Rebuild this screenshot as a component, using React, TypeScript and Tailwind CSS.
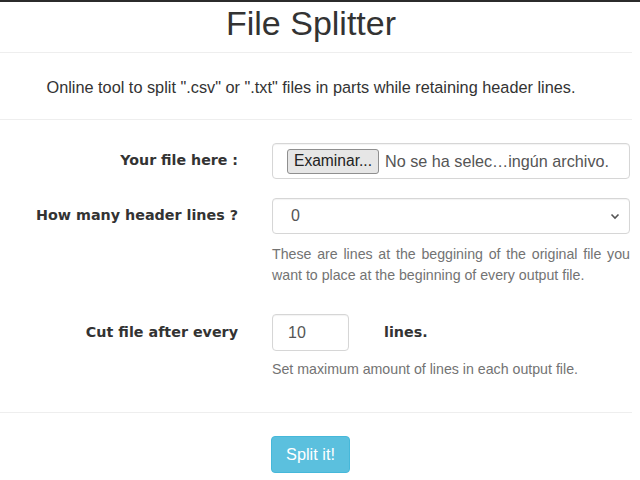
import React from "react";

const sans = { fontFamily: '"Liberation Sans", Arial, sans-serif' } as const;

export default function App() {
  return (
    <div className="w-[640px] h-[480px] bg-white overflow-hidden text-[#333] font-['Liberation_Sans',Arial,sans-serif]">
      <div className="h-[2px] bg-[#2b2b2b]" />
      <h1 className="w-[622px] mt-[3px] text-center text-[34px] leading-[37px] text-[#333]">File Splitter</h1>
      <div className="w-[632px] h-px bg-[#eeeeee] mt-[10px]" />
      <p className="w-[622px] text-center text-[16.3px] leading-[21px] mt-[24px] text-[#333]">
        Online tool to split ".csv" or ".txt" files in parts while retaining header lines.
      </p>
      <div className="w-[632px] h-px bg-[#eeeeee] mt-[21px]" />

      <div className="flex items-center mt-[23px]">
        <div className="w-[238px] text-right font-['DejaVu_Sans',Verdana,sans-serif] font-bold text-[14.2px] text-[#333]">
          Your file here :
        </div>
        <div className="ml-[34px] w-[358px] h-[36px] border border-[#d6d6d6] rounded-[4px] flex items-center pl-[14px] shadow-[inset_0_1px_1px_rgba(0,0,0,0.05)]">
          <span className="h-[25px] px-[6px] flex items-center border border-[#8f8f8f] rounded-[3px] bg-[#e6e6e6] text-[15.6px] text-[#222]">
            Examinar...
          </span>
          <span className="ml-[6px] text-[16.2px] text-[#555]">No se ha selec…ingún archivo.</span>
        </div>
      </div>

      <div className="flex items-center mt-[19px]">
        <div className="w-[238px] text-right font-['DejaVu_Sans',Verdana,sans-serif] font-bold text-[14.3px] text-[#333]">
          How many header lines ?
        </div>
        <div className="ml-[34px] w-[358px] h-[36px] border border-[#d6d6d6] rounded-[4px] flex items-center justify-between pl-[18px] pr-[9px] shadow-[inset_0_1px_1px_rgba(0,0,0,0.05)]">
          <span className="text-[16px] text-[#555]">0</span>
          <svg width="10" height="7" viewBox="0 0 10 7" className="text-[#555]">
            <path d="M1.5 1.5 L5 5 L8.5 1.5" fill="none" stroke="currentColor" strokeWidth="1.6" />
          </svg>
        </div>
      </div>
      <p className="ml-[272px] w-[358px] mt-[10px] text-[14.2px] leading-[21px] text-[#737373] text-justify" style={sans}>
        These are lines at the beggining of the original file you want to place at the beginning of every output file.
      </p>

      <div className="flex items-center mt-[28px]">
        <div className="w-[238px] text-right font-['DejaVu_Sans',Verdana,sans-serif] font-bold text-[14.3px] text-[#333]">
          Cut file after every
        </div>
        <div className="ml-[34px] w-[77px] h-[37px] border border-[#d6d6d6] rounded-[4px] flex items-center pl-[15px] shadow-[inset_0_1px_1px_rgba(0,0,0,0.05)]">
          <span className="text-[16px] text-[#555]">10</span>
        </div>
        <div className="ml-[35px] font-['DejaVu_Sans',Verdana,sans-serif] font-bold text-[14.3px] text-[#333]">lines.</div>
      </div>
      <p className="ml-[272px] w-[358px] mt-[8px] text-[14.2px] leading-[21px] text-[#737373]" style={sans}>
        Set maximum amount of lines in each output file.
      </p>

      <div className="w-[632px] h-px bg-[#eeeeee] mt-[32px]" />

      <div className="ml-[271px] mt-[23px] w-[79px] h-[37px] rounded-[4px] bg-[#5bc0de] border border-[#46b8da] flex items-center justify-center text-white text-[16.3px]">
        Split it!
      </div>
    </div>
  );
}
